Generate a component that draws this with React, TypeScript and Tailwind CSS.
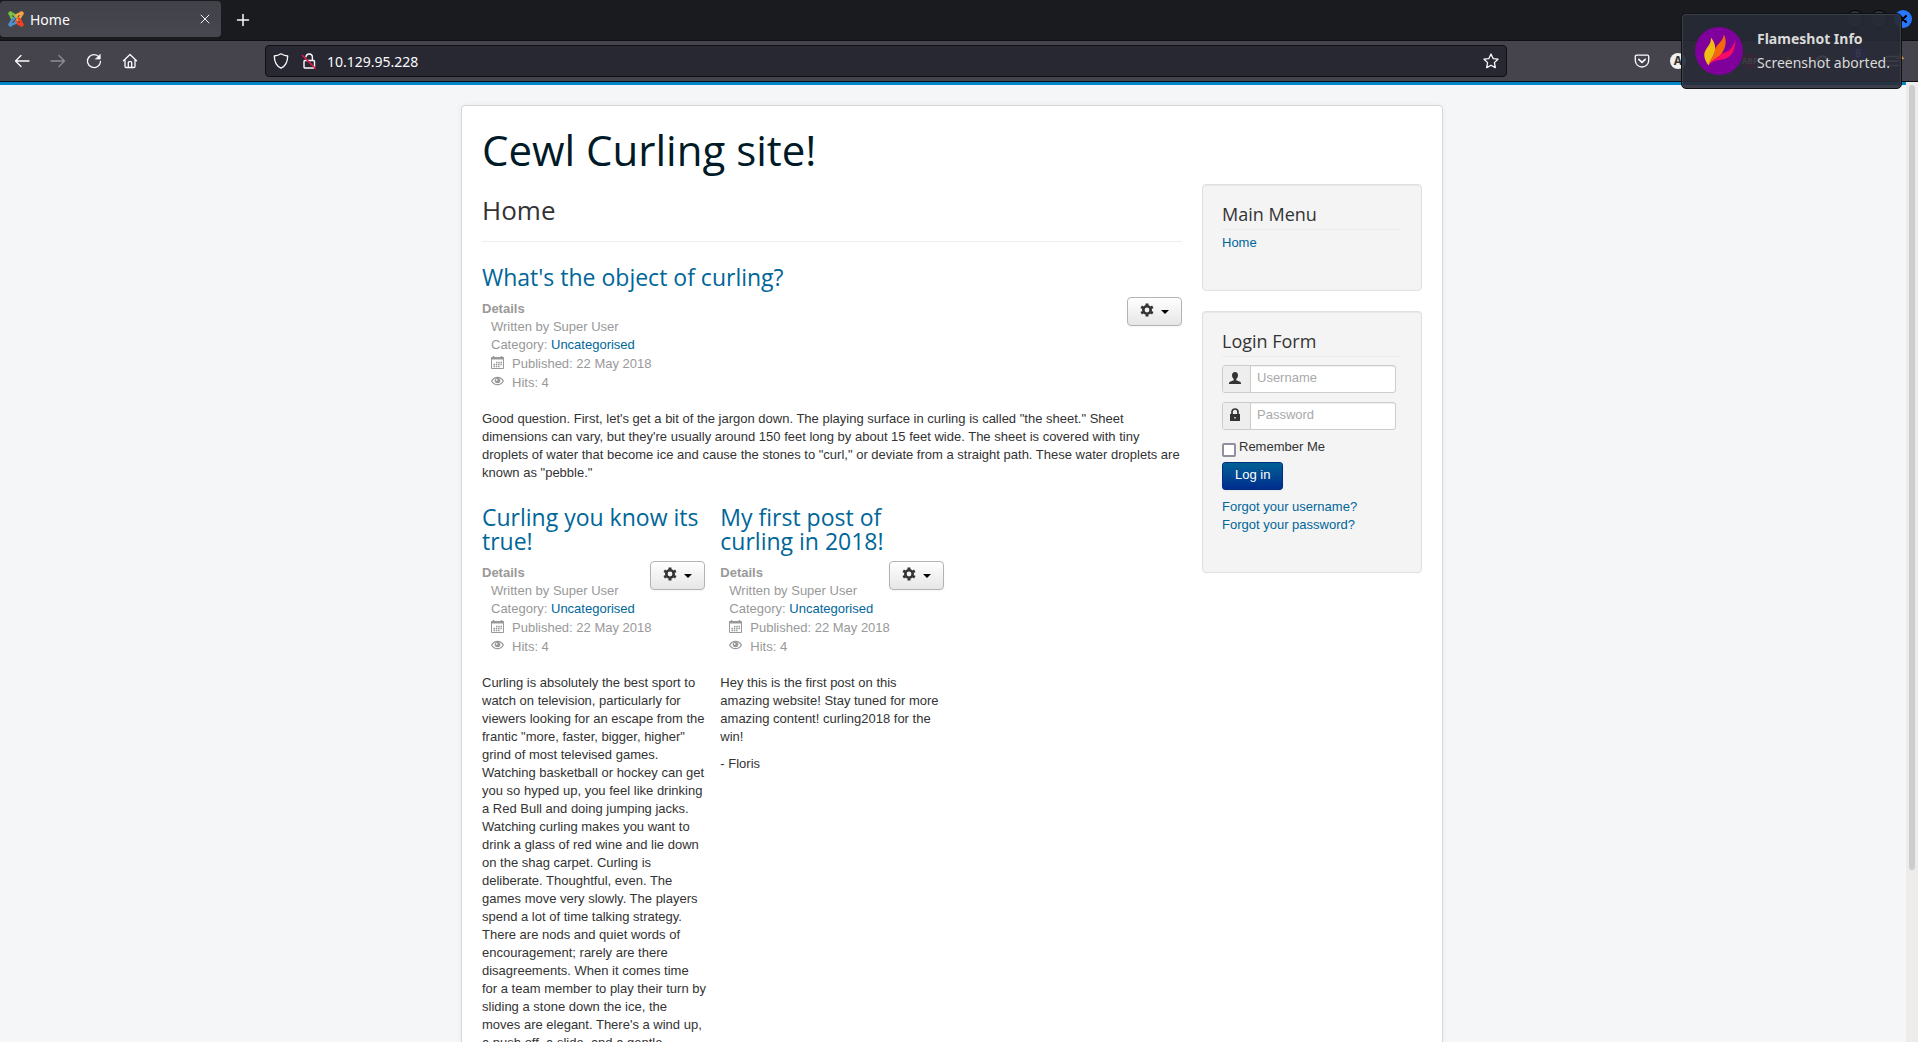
import type { ReactNode } from "react";

const HEADING = "font-['Open_Sans','Noto_Sans',sans-serif]";
const UI = "font-['Noto_Sans','Open_Sans',sans-serif]";
const LINK = "text-[#006699] hover:underline";

function JoomlaLogo() {
  return (
    <svg viewBox="0 0 32 32" className="size-4" aria-hidden="true">
      <g fill="none" strokeWidth="5" strokeLinecap="round">
        <path d="M6 6c3-1 5 0 7 2l8 8" stroke="#7ac143" />
        <path d="M6 6c-1 3 0 5 1 7l3 3" stroke="#7ac143" />
        <path d="M26 6c1 3 0 5-2 7l-8 8" stroke="#f9a541" />
        <path d="M26 6c-3-1-5 0-7 1l-3 3" stroke="#f9a541" />
        <path d="M26 26c-3 1-5 0-7-2l-3-3" stroke="#f44321" />
        <path d="M26 26c1-3 0-5-1-7l-4-4" stroke="#f44321" />
        <path d="M6 26c-1-3 0-5 2-7l5-5" stroke="#5091cd" />
        <path d="M6 26c3 1 5 0 7-1l2-2" stroke="#5091cd" />
      </g>
      <circle cx="5" cy="5" r="4.5" fill="#7ac143" />
      <circle cx="27" cy="5" r="4.5" fill="#f9a541" />
      <circle cx="27" cy="27" r="4.5" fill="#f44321" />
      <circle cx="5" cy="27" r="4.5" fill="#5091cd" />
    </svg>
  );
}

function NavButton({ label, children }: { label: string; children: ReactNode }) {
  return (
    <button type="button" aria-label={label} className="flex h-8 w-9 items-center justify-center text-[#fbfbfe]">
      {children}
    </button>
  );
}

function Icon({ children, className = "size-4" }: { children: ReactNode; className?: string }) {
  return (
    <svg
      viewBox="0 0 16 16"
      className={className}
      fill="none"
      stroke="currentColor"
      strokeWidth="1.3"
      strokeLinecap="round"
      strokeLinejoin="round"
      aria-hidden="true"
    >
      {children}
    </svg>
  );
}

function TabStrip() {
  return (
    <div className="flex h-10 items-start bg-[#1a1b1f]">
      <div className="mt-px flex h-9 w-[221px] items-center rounded-[4px] bg-linear-to-b from-[#414149] to-[#47474f] pr-2 pl-2">
        <JoomlaLogo />
        <span className="ml-1.5 flex-1 text-[14px] text-[#fbfbfe]">Home</span>
        <button type="button" aria-label="Close tab" className="flex size-4 items-center justify-center text-[#fbfbfe]">
          <Icon className="size-[14px]">
            <path d="M3.5 3.5l9 9M12.5 3.5l-9 9" strokeWidth="1.1" />
          </Icon>
        </button>
      </div>
      <button type="button" aria-label="New tab" className="mt-1 ml-1.5 flex h-8 w-8 items-center justify-center text-[#fbfbfe]">
        <Icon>
          <path d="M8 2.5v11M2.5 8h11" strokeWidth="1.5" />
        </Icon>
      </button>
      <div className="mt-2.5 mr-1.5 ml-auto flex gap-1.5 text-black">
        <span className="size-[18px] rounded-full border border-black bg-[#33363f]" />
        <span className="size-[18px] rounded-full border border-black bg-[#33363f]" />
        <button type="button" aria-label="Close window" className="flex size-[18px] items-center justify-center rounded-full bg-[#2777ff]">
          <Icon className="size-3">
            <path d="M4 4l8 8M12 4l-8 8" strokeWidth="3" />
          </Icon>
        </button>
      </div>
    </div>
  );
}

function Toolbar() {
  return (
    <div className="flex h-[42px] items-center border-y border-[#0f0f13] bg-[#45444d] pr-1.5 pl-1">
      <NavButton label="Back">
        <Icon>
          <path d="M15 8H1.5M7 2.5L1.5 8 7 13.5" />
        </Icon>
      </NavButton>
      <NavButton label="Forward">
        <span className="opacity-40">
          <Icon>
            <path d="M1 8h13.5M9 2.5L14.5 8 9 13.5" />
          </Icon>
        </span>
      </NavButton>
      <NavButton label="Reload">
        <Icon>
          <path d="M13.2 4.2A6.5 6.5 0 1 0 14.5 8.5" />
          <path d="M14.3 1.5v4.6H9.7z" fill="currentColor" strokeWidth="0.6" />
        </Icon>
      </NavButton>
      <NavButton label="Home page">
        <Icon>
          <path d="M1.5 7.8L8 1.5l6.5 6.3M3 6.8v6.5c0 .8.5 1.2 1.2 1.2h7.6c.7 0 1.2-.4 1.2-1.2V6.8M6.3 14.2V9.5c0-.6.3-.9.8-.9h1.8c.5 0 .8.3.8.9v4.7" />
        </Icon>
      </NavButton>
      <div className="mr-[117px] ml-[117px] flex h-8 flex-1 items-center rounded-[4px] border border-[#0f0f14] bg-[#282833] px-[7px] text-[#fbfbfe]">
        <Icon>
          <path d="M8 .8c2 1.3 4 2 6.7 2.2 0 5.5-1.5 9.700-6.700 12.200C2.800 12.700 1.300 8.500 1.300 3 4 2.800 6 2.100 8 .8z" />
        </Icon>
        <svg viewBox="0 0 16 16" className="ml-3 size-4" fill="none" stroke="currentColor" strokeWidth="1.4" aria-hidden="true">
          <rect x="3" y="7.500" width="10.500" height="7.500" rx="1" />
          <path d="M5 4.300C5 2.500 6.300 1 8.200 1s3.200 1.500 3.200 3.300v3" />
          <path d="M1 2l13.500 13.500" stroke="#e0174c" strokeWidth="1.6" />
        </svg>
        <input
          aria-label="Address"
          defaultValue="10.129.95.228"
          className="ml-2.5 min-w-0 flex-1 bg-transparent text-[14px] outline-none"
        />
        <button type="button" aria-label="Bookmark this page" className="flex size-4 items-center justify-center">
          <Icon>
            <path d="M8 1l2.100 4.600 4.900.6-3.600 3.400.9 5L8 12.200l-4.300 2.400.9-5L1 6.200l4.900-.6z" />
          </Icon>
        </button>
      </div>
      <NavButton label="Save to Pocket">
        <Icon>
          <path d="M2.600 2.200h10.800c.8 0 1.300.5 1.300 1.300v4A6.600 6.600 0 0 1 8 14 6.600 6.600 0 0 1 1.300 7.500v-4c0-.8.5-1.300 1.300-1.300z" />
          <path d="M4.800 6.300L8 9.300l3.200-3" strokeWidth="1.600" />
        </Icon>
      </NavButton>
      <NavButton label="Account extension">
        <span className="flex size-4 items-center justify-center rounded-full bg-[#f0f0f0] text-[12px] font-bold text-[#333]">A</span>
      </NavButton>
      <NavButton label="Privacy extension">
        <Icon>
          <rect x="5" y="8" width="8" height="6" fill="#b8b8c0" />
          <path d="M6 8V5.500a2.500 2.500 0 0 1 5 0V8" />
        </Icon>
      </NavButton>
      <NavButton label="Ad blocker">
        <span className="rounded-full bg-[#c4122f] text-[8px] leading-4 font-bold">ABP</span>
      </NavButton>
      <NavButton label="Proxy extension">
        <span className="text-[#f68b1f]">
          <Icon>
            <path d="M3 12c3 2 8 1 9-3s-2-5-2-5-1 4-4 5" />
          </Icon>
        </span>
      </NavButton>
      <NavButton label="Cookie extension">
        <Icon>
          <path d="M2 8c3-6 9-6 11-2s-2 5-4 3M5 9l3 4" strokeWidth="2" />
        </Icon>
      </NavButton>
      <NavButton label="Notes extension">
        <span className="mb-4 bg-[#5b2dd8] px-1 text-[10px] leading-3">8</span>
      </NavButton>
      <NavButton label="Open application menu">
        <svg viewBox="0 0 20 16" className="h-4 w-5" fill="none" stroke="currentColor" strokeWidth="1.300" aria-hidden="true">
          <path d="M2 3.500h12M2 8h13M2 12.500h13" />
          <path d="M16 0l4 6h-8z" fill="#ffa436" stroke="none" />
        </svg>
      </NavButton>
    </div>
  );
}

function Notification() {
  return (
    <div
      role="status"
      className="absolute top-[13px] right-4 flex h-[76px] w-[221px] items-center rounded-[5px] border border-[#101116] bg-linear-to-b from-[#252a34e8] to-[#292a37e8] pl-[13px] shadow-[inset_0_0_0_1px_#3b3f4a]"
    >
      <svg viewBox="0 0 48 48" className="size-12 shrink-0" aria-hidden="true">
        <circle cx="24" cy="24" r="24" fill="#80009c" />
        <path d="M13 38.500C14 33 21 28 31 25c5-2 7-6 9.500-11.500C40 25 36 31 27 32.500c-6 1-11 2-14 6z" fill="#f50b63" />
        <path d="M14 38c1-6 5-8 5.500-13C20 18 28 15 29 7.500c3.500 8 1 15-3 19.500-4 4-9 5-12 11z" fill="#f4680b" />
        <path d="M13.500 38.500C9 32 8 27 11 22.500c2.500-4 5-6 5-12 4 5 5 10 3.500 15-1.500 5-5 8-6 13z" fill="#f0bd12" />
      </svg>
      <div className="ml-3.5 text-[14px] leading-6 whitespace-nowrap text-[#dadada]">
        <p className="font-bold">Flameshot Info</p>
        <p>Screenshot aborted.</p>
      </div>
    </div>
  );
}

function GearButton() {
  return (
    <button
      type="button"
      aria-label="Article options"
      className="flex h-[29px] w-[55px] shrink-0 items-center justify-center gap-[7px] rounded-[4px] border border-[#b3b3b3] bg-linear-to-b from-white to-[#e6e6e6] shadow-[inset_0_1px_0_#ffffff33,0_1px_2px_#0000000d]"
    >
      <svg viewBox="0 0 14 14" className="mb-1 size-[14px]" fill="none" stroke="#333" aria-hidden="true">
        <circle cx="7" cy="7" r="3.700" strokeWidth="2.600" />
        <path d="M7 .5v2M7 11.500v2M1.200 3.800l1.800 1M11 9.200l1.800 1M1.200 10.200l1.800-1M11 4.800l1.800-1" strokeWidth="3" />
      </svg>
      <svg viewBox="0 0 8 4" className="mt-px h-1 w-2" aria-hidden="true">
        <path d="M0 0h8L4 4z" fill="#000" />
      </svg>
    </button>
  );
}

function Details() {
  return (
    <div className="flex justify-between text-[#999]">
      <dl className="w-0 flex-1 whitespace-nowrap">
        <dt className="font-bold">Details</dt>
        <dd className="ml-[9px]">Written by Super User</dd>
        <dd className="ml-[9px]">
          Category:{" "}
          <a href="#uncategorised" className={LINK}>
            Uncategorised
          </a>
        </dd>
        <dd className="ml-[9px] flex h-[19px] items-center">
          <svg viewBox="0 0 13 13" className="mr-2 mb-0.5 size-[13px] shrink-0" fill="none" stroke="currentColor" aria-hidden="true">
            <path d="M.5 1.500h12v11H.5z" />
            <path d="M0 2.500h13" strokeWidth="2" />
            <path d="M2.500 0v3M10.500 0v3" strokeWidth="1.500" />
            <path d="M5 6.500h6M2.500 8.500H11M2.500 10.500H9" strokeWidth="1.300" strokeDasharray="1.500 0.800" />
          </svg>
          Published: 22 May 2018
        </dd>
        <dd className="ml-[9px] flex h-[19px] items-center">
          <svg viewBox="0 0 13 10" className="mr-2 mb-1 h-2.5 w-[13px] shrink-0" fill="none" stroke="currentColor" aria-hidden="true">
            <path d="M.6 5C2 2.500 4 1.300 6.500 1.300S11 2.500 12.400 5C11 7.500 9 8.700 6.500 8.700S2 7.500.6 5z" strokeWidth="1.200" />
            <circle cx="6.500" cy="4.500" r="2.800" fill="currentColor" stroke="none" />
            <circle cx="5.700" cy="3.800" r="0.900" fill="#fff" stroke="none" />
          </svg>
          Hits: 4
        </dd>
      </dl>
      <div className="-mt-[3px]">
        <GearButton />
      </div>
    </div>
  );
}

function Article({ title, children }: { title: string; children: ReactNode }) {
  return (
    <article>
      <h2 className={`${HEADING} mb-[11px] text-[23px] leading-6 text-[#006699]`}>
        <a href="#article">{title}</a>
      </h2>
      <Details />
      <div className="mt-[18px] -mr-0.5 flex flex-col gap-[9px]">{children}</div>
    </article>
  );
}

function Module({ title, children }: { title: string; children: ReactNode }) {
  return (
    <section className="rounded-[4px] border border-[#e0e0e0] bg-[#f4f4f4] p-[19px] shadow-[inset_0_1px_1px_#0000000d]">
      <h3 className={`${HEADING} mr-px border-b border-[#ebebeb] pb-1 text-[18px] leading-[21px] text-[#333]`}>{title}</h3>
      {children}
    </section>
  );
}

function Field({ label, type, icon }: { label: string; type: string; icon: ReactNode }) {
  return (
    <div className="mr-1.5 flex h-7 overflow-hidden rounded-[3px] border border-[#ccc] bg-white">
      <span className="flex w-7 shrink-0 items-center justify-center border-r border-[#ccc] bg-[#eee] pr-1 pb-[3px] text-[#333]">{icon}</span>
      <input
        type={type}
        aria-label={label}
        placeholder={label}
        className="min-w-0 flex-1 px-1.5 pb-[3px] shadow-[inset_0_1px_1px_#00000013] outline-none placeholder:text-[#a9a9a9]"
      />
    </div>
  );
}

function Sidebar() {
  return (
    <aside className="flex w-[220px] shrink-0 flex-col gap-5">
      <Module title="Main Menu">
        <nav className="mt-1 mb-[19px]">
          <a href="#home" className={LINK}>
            Home
          </a>
        </nav>
      </Module>
      <Module title="Login Form">
        <form className="mt-2 mb-[19px]" onSubmit={(event) => event.preventDefault()}>
          <div className="flex flex-col gap-[9px]">
            <Field
              label="Username"
              type="text"
              icon={
                <svg viewBox="0 0 12 12" className="size-3" fill="currentColor" aria-hidden="true">
                  <path d="M6 0c2 0 3 1.300 3 3.200 0 1.500-.7 3-1.700 3.800v1.200l3.700 1.500c.7.300 1 .8 1 2.300H0c0-1.500.3-2 1-2.300l3.700-1.500V7C3.700 6.200 3 4.700 3 3.200 3 1.300 4 0 6 0z" />
                </svg>
              }
            />
            <Field
              label="Password"
              type="password"
              icon={
                <svg viewBox="0 0 12 14" className="h-3.5 w-3" aria-hidden="true">
                  <path d="M3 7V4c0-1.800 1.200-3 3-3s3 1.200 3 3v3" fill="none" stroke="currentColor" strokeWidth="1.700" />
                  <path d="M1 6h10v7H1z" fill="currentColor" />
                  <path d="M5.300 9h1.400v1.500H5.300z" fill="#eee" />
                </svg>
              }
            />
          </div>
          <div className="mt-2 flex h-[23px]">
            <input
              id="remember"
              type="checkbox"
              className="mt-[5px] size-3.5 appearance-none rounded-[2px] border-2 border-[#8f8f9d] bg-white checked:bg-[#0060df]"
            />
            <label htmlFor="remember" className="ml-[3px]">
              Remember Me
            </label>
          </div>
          <button
            type="submit"
            className="mt-px flex h-7 items-center rounded-[3px] border border-[#002f80] bg-linear-to-b from-[#006094] to-[#002b8e] px-3 pb-[3px] text-white shadow-[0_1px_2px_#0000000d]"
          >
            Log in
          </button>
          <ul className="mt-2">
            <li>
              <a href="#username" className={LINK}>
                Forgot your username?
              </a>
            </li>
            <li>
              <a href="#password" className={LINK}>
                Forgot your password?
              </a>
            </li>
          </ul>
        </form>
      </Module>
    </aside>
  );
}

export default function App() {
  return (
    <div className={`${UI} relative flex h-screen flex-col overflow-hidden`}>
      <TabStrip />
      <Toolbar />
      <Notification />
      <div className="flex min-h-0 flex-1">
        <div className="min-w-0 flex-1 overflow-hidden border-t-[3px] border-[#0088cc] bg-[#f4f6f8] pt-5 pr-[22px] pl-5 font-['Liberation_Sans',Arial,sans-serif] text-[13px] leading-[18px] text-[#333]">
          <div className="mx-auto max-w-[982px] rounded-[4px] border border-[#d4d7da] bg-white p-5 shadow-[0_0_6px_#0000000d]">
            <header className="mb-2.5">
              <h1 className={`${HEADING} text-[42px] leading-[48px] text-[#001a27]`}>
                <a href="#home">Cewl Curling site!</a>
              </h1>
            </header>
            <div className="flex gap-5">
              <main className="min-w-0 flex-1">
                <h2 className={`${HEADING} mb-[23px] border-b border-[#eee] pt-2 pb-[13px] text-[26px] leading-9 text-[#333]`}>Home</h2>
                <Article title="What's the object of curling?">
                  <p>
                    Good question. First, let's get a bit of the jargon down. The playing surface in curling is called "the sheet." Sheet
                    dimensions can vary, but they're usually around 150 feet long by about 15 feet wide. The sheet is covered with tiny
                    droplets of water that become ice and cause the stones to "curl," or deviate from a straight path. These water droplets
                    are known as "pebble."
                  </p>
                </Article>
                <div className="mt-[23px] grid grid-cols-3 gap-[15px]">
                  <Article title="Curling you know its true!">
                    <p>
                      Curling is absolutely the best sport to watch on television, particularly for viewers looking for an escape from the
                      frantic "more, faster, bigger, higher" grind of most televised games. Watching basketball or hockey can get you so
                      hyped up, you feel like drinking a Red Bull and doing jumping jacks. Watching curling makes you want to drink a glass
                      of red wine and lie down on the shag carpet. Curling is deliberate. Thoughtful, even. The games move very slowly. The
                      players spend a lot of time talking strategy. There are nods and quiet words of encouragement; rarely are there
                      disagreements. When it comes time for a team member to play their turn by sliding a stone down the ice, the moves are
                      elegant. There's a wind up, a push off, a slide, and a gentle release.
                    </p>
                  </Article>
                  <Article title="My first post of curling in 2018!">
                    <p>
                      Hey this is the first post on this amazing website! Stay tuned for more amazing content! curling2018 for the win!
                    </p>
                    <p>- Floris</p>
                  </Article>
                </div>
              </main>
              <Sidebar />
            </div>
          </div>
        </div>
        <div className="w-3 bg-[#eeecea] px-[3px] pt-[3px]" aria-hidden="true">
          <div className="h-[82%] rounded-full bg-[#cdcdcd]" />
        </div>
      </div>
    </div>
  );
}
